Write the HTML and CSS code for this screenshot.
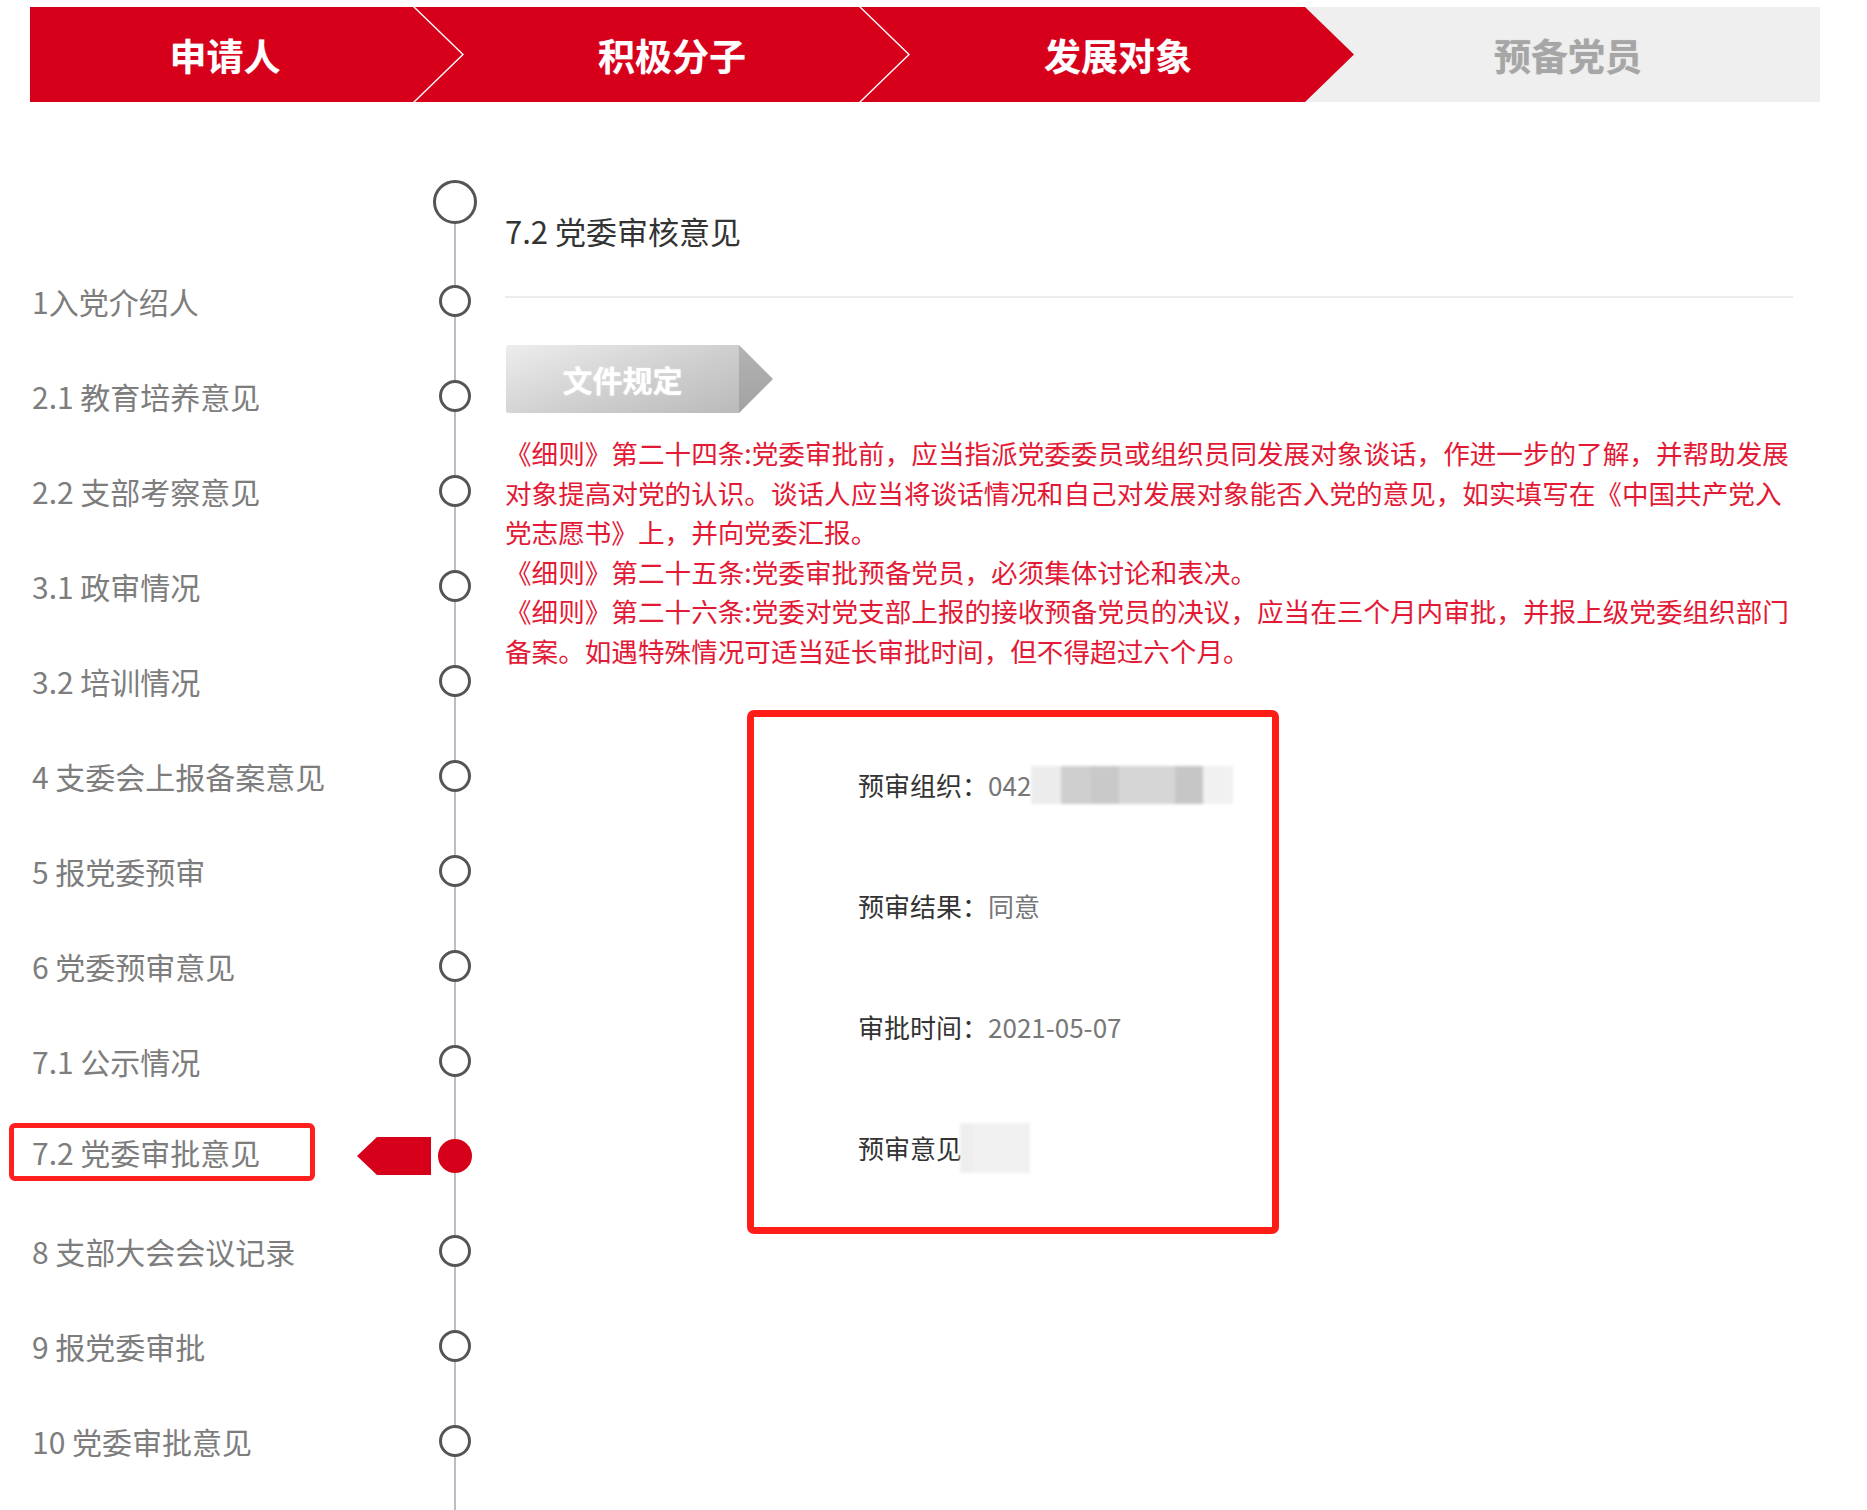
FILE: index.html
```html
<!DOCTYPE html>
<html lang="zh-CN">
<head>
<meta charset="utf-8">
<title>党委审核意见</title>
<link rel="stylesheet" href="styles.css">
</head>
<body>
<div class="steps">
  <div class="step step-first"><span>申请人</span></div>
  <div class="step step-mid"><span>积极分子</span></div>
  <div class="step step-mid"><span>发展对象</span></div>
  <div class="step step-last"><span>预备党员</span></div>
</div>
<div class="main">
  <aside class="timeline">
    <div class="start-node"><span class="marker"><span class="dot dot-start"></span></span></div>
    <ul class="nodes">
      <li class="node"><span class="label">1入党介绍人</span><span class="marker"><span class="dot"></span></span></li>
      <li class="node"><span class="label">2.1 教育培养意见</span><span class="marker"><span class="dot"></span></span></li>
      <li class="node"><span class="label">2.2 支部考察意见</span><span class="marker"><span class="dot"></span></span></li>
      <li class="node"><span class="label">3.1 政审情况</span><span class="marker"><span class="dot"></span></span></li>
      <li class="node"><span class="label">3.2 培训情况</span><span class="marker"><span class="dot"></span></span></li>
      <li class="node"><span class="label">4 支委会上报备案意见</span><span class="marker"><span class="dot"></span></span></li>
      <li class="node"><span class="label">5 报党委预审</span><span class="marker"><span class="dot"></span></span></li>
      <li class="node"><span class="label">6 党委预审意见</span><span class="marker"><span class="dot"></span></span></li>
      <li class="node"><span class="label">7.1 公示情况</span><span class="marker"><span class="dot"></span></span></li>
      <li class="node"><span class="label label-active">7.2 党委审批意见</span><span class="flag"></span><span class="marker"><span class="dot dot-active"></span></span></li>
      <li class="node"><span class="label">8 支部大会会议记录</span><span class="marker"><span class="dot"></span></span></li>
      <li class="node"><span class="label">9 报党委审批</span><span class="marker"><span class="dot"></span></span></li>
      <li class="node"><span class="label">10 党委审批意见</span><span class="marker"><span class="dot"></span></span></li>
    </ul>
  </aside>
  <section class="content">
    <h2 class="title">7.2 党委审核意见</h2>
    <div class="divider"></div>
    <div class="doc-tag"><span class="doc-body">文件规定</span><span class="doc-arrow"></span></div>
    <div class="rules">
      <p>《细则》第二十四条:党委审批前，应当指派党委委员或组织员同发展对象谈话，作进一步的了解，并帮助发展对象提高对党的认识。谈话人应当将谈话情况和自己对发展对象能否入党的意见，如实填写在《中国共产党入党志愿书》上，并向党委汇报。</p>
      <p>《细则》第二十五条:党委审批预备党员，必须集体讨论和表决。</p>
      <p>《细则》第二十六条:党委对党支部上报的接收预备党员的决议，应当在三个月内审批，并报上级党委组织部门备案。如遇特殊情况可适当延长审批时间，但不得超过六个月。</p>
    </div>
    <div class="review-box">
      <div class="field"><span class="field-name">预审组织：</span><span class="field-value">042</span><span class="mask mask-org"><i class="m1"></i><i class="m2"></i><i class="m3"></i><i class="m4"></i><i class="m5"></i><i class="m6"></i></span></div>
      <div class="field"><span class="field-name">预审结果：</span><span class="field-value">同意</span></div>
      <div class="field"><span class="field-name">审批时间：</span><span class="field-value">2021-05-07</span></div>
      <div class="field"><span class="field-name">预审意见</span><span class="mask mask-opinion"><i class="n1"></i><i class="n2"></i></span></div>
    </div>
  </section>
</div>
</body>
</html>
```
FILE: styles.css
```css
html, body {
  margin: 0;
  padding: 0;
  background: #ffffff;
}
body {
  font-family: "Noto Sans CJK SC", "Noto Sans", "Liberation Sans", sans-serif;
  color: #333333;
  width: 1867px;
  height: 1510px;
  overflow: hidden;
}

/* ---------- step bar ---------- */
.steps {
  display: flex;
  margin: 7px 0 0 30px;
  height: 95px;
}
.step {
  height: 95px;
  display: flex;
  align-items: center;
  justify-content: center;
  box-sizing: border-box;
  font-size: 37px;
  font-weight: 700;
  color: #ffffff;
  background: #d7001b;
  position: relative;
  z-index: 2;
}
.step span { text-shadow: 0 0 1px rgba(255,255,255,0.4); }
.step-first {
  width: 432px;
  padding-right: 42px;
  clip-path: polygon(0 0, calc(100% - 49px) 0, 100% 50%, calc(100% - 49px) 100%, 0 100%);
}
.step-mid {
  width: 493px;
  margin-left: -47px;
  padding-left: 70px;
  padding-right: 49px;
  clip-path: polygon(0 0, calc(100% - 49px) 0, 100% 50%, calc(100% - 49px) 100%, 0 100%, 49px 50%);
}
.step-last {
  width: 515px;
  margin-left: -49px;
  padding-left: 11px;
  background: #efefef;
  color: #a6a6a6;
  z-index: 1;
}
.step-last span { text-shadow: 0 0 1px rgba(150,150,150,0.5); }

/* ---------- layout ---------- */
.main {
  display: flex;
  align-items: flex-start;
}

/* ---------- timeline ---------- */
.timeline {
  position: relative;
  width: 477px;
  box-sizing: border-box;
  padding: 78px 0 21px 9px;
  flex: none;
}
.timeline::before {
  content: "";
  position: absolute;
  left: 454px;
  top: 121px;
  bottom: 0;
  width: 2px;
  background: #b9bec7;
}
.start-node {
  display: flex;
  justify-content: flex-end;
  height: 43px;
}
.marker {
  width: 44px;
  display: flex;
  justify-content: center;
  align-items: center;
  flex: none;
}
.dot {
  position: relative;
  z-index: 1;
  display: block;
  width: 32px;
  height: 32px;
  box-sizing: border-box;
  border: 3px solid #555555;
  border-radius: 50%;
  background: #ffffff;
}
.dot-start {
  width: 44px;
  height: 44px;
  border-width: 3.5px;
}
.dot-active {
  width: 34px;
  height: 34px;
  border-color: #d7001b;
  background: #d7001b;
}
.nodes {
  list-style: none;
  margin: 30.5px 0 0 0;
  padding: 0;
}
.node {
  display: flex;
  align-items: center;
  height: 95px;
}
.label {
  margin-right: auto;
  font-size: 30px;
  line-height: 48px;
  color: #7d7d7d;
  padding: 0 18px;
  border: 5px solid transparent;
  border-radius: 6px;
  white-space: nowrap;
}
.label-active {
  width: 306px;
  box-sizing: border-box;
  border-color: #ff1f1f;
  margin-top: -9px;
}
.flag {
  width: 74px;
  height: 38px;
  margin-right: 2px;
  background: #d7001b;
  clip-path: polygon(20px 0, 100% 0, 100% 100%, 20px 100%, 0 50%);
  flex: none;
}

/* ---------- content ---------- */
.content {
  flex: none;
  width: 1292px;
  margin-left: 28px;
  padding-top: 109px;
}
.title {
  margin: 0;
  font-size: 31px;
  line-height: 40px;
  font-weight: 400;
  color: #333333;
}
.divider {
  height: 2px;
  background: #ececec;
  margin: 45px 4px 0 0;
}
.doc-tag {
  display: flex;
  margin: 47px 0 0 1px;
  height: 68px;
}
.doc-body {
  width: 233px;
  height: 68px;
  display: flex;
  align-items: center;
  justify-content: center;
  background: linear-gradient(160deg, #ededed 0%, #cfcfcf 55%, #bababa 100%);
  border-radius: 2px 0 0 2px;
  color: #ffffff;
  font-size: 30px;
  font-weight: 700;
  text-shadow: 0 0 2px rgba(255,255,255,0.6);
}
.doc-arrow {
  width: 34px;
  height: 68px;
  background: linear-gradient(180deg, #b3b3b3, #a2a2a2);
  clip-path: polygon(0 0, 100% 50%, 0 100%);
}
.rules {
  margin-top: 20px;
  color: #e31a36;
  font-size: 26.6px;
  line-height: 39.5px;
  text-spacing-trim: space-all;
}
.rules p { margin: 0; }

.review-box {
  margin: 40px 0 0 242px;
  width: 532px;
  height: 524px;
  box-sizing: border-box;
  border: 7px solid #ff1d17;
  border-radius: 7px;
  padding: 50px 0 0 104px;
  display: flex;
  flex-direction: column;
  gap: 85px;
}
.field {
  display: flex;
  align-items: center;
  height: 36px;
  font-size: 26px;
  line-height: 36px;
  white-space: nowrap;
}
.field-name { color: #333333; }
.field-value { color: #777777; }

.mask {
  display: flex;
  filter: blur(1.5px);
}
.mask i { display: block; }
.mask-org {
  height: 38px;
  margin-left: 0;
}
.mask-org .m1 { width: 30px; background: #ececec; }
.mask-org .m2 { width: 30px; background: #cfcfcf; }
.mask-org .m3 { width: 28px; background: #c9c9c9; }
.mask-org .m4 { width: 56px; background: #d6d6d6; }
.mask-org .m5 { width: 28px; background: #c6c6c6; }
.mask-org .m6 { width: 30px; background: #f1f1f1; }
.mask-opinion {
  height: 50px;
  margin-left: -2px;
}
.mask-opinion .n1 { width: 14px; background: #eeeeee; }
.mask-opinion .n2 { width: 56px; background: #f1f1f1; }
```
